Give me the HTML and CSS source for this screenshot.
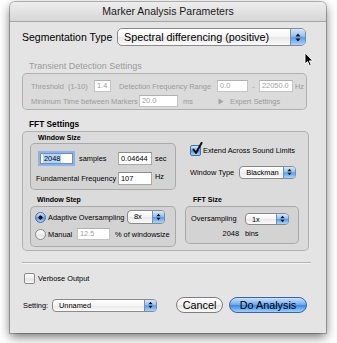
FILE: index.html
```html
<!DOCTYPE html>
<html lang="en">
<head>
    <meta charset="UTF-8" />
    <meta name="viewport" content="width=device-width, initial-scale=1.0" />
    <title>Marker Analysis Parameters</title>
    <link rel="stylesheet" href="styles.css">
</head>
<body>
    <div class="window">
        <div class="titlebar">Marker Analysis Parameters</div>
        <div class="content">
            <div class="seg-row">
                <span class="seg-label">Segmentation Type</span>
                <div class="popup popup-seg">
                    <span class="popup-text">Spectral differencing (positive)</span>
                    <span class="popup-cap"><svg width="6" height="9" viewBox="0 0 6 9"><path d="M3 0.5 L5.5 3.5 H0.5 Z M3 8.5 L5.5 5.5 H0.5 Z" fill="#111"/></svg></span>
                </div>
            </div>

            <div class="group-title disabled">Transient Detection Settings</div>
            <div class="group transient disabled">
                <div class="t-row1">
                    <span>Threshold&nbsp; (1-10)</span>
                    <span class="field">1.4</span>
                    <span class="pad8">Detection Frequency Range</span>
                    <span class="field">0.0</span>
                    <span class="dash">-</span>
                    <span class="field">22050.0</span>
                    <span class="pad2">Hz</span>
                </div>
                <div class="t-row2">
                    <span>Minimum Time between Markers</span>
                    <span class="field">20.0</span>
                    <span class="pad5">ms</span>
                    <span class="disclosure"><svg width="6" height="7" viewBox="0 0 6 7"><path d="M0.5 0.5 L5.5 3.5 L0.5 6.5 Z" fill="#a3a3a3"/></svg></span>
                    <span>Expert Settings</span>
                </div>
            </div>

            <div class="group-title bold">FFT Settings</div>
            <div class="group fft">
                <div class="fft-top">
                    <div class="sub-col">
                        <div class="sub-title title-winsize">Window Size</div>
                        <div class="group winsize">
                            <div class="ws-row1">
                                <span class="field focused"><span class="selection">2048</span></span>
                                <span class="pad6">samples</span>
                                <span class="field">0.04644</span>
                                <span class="pad3">sec</span>
                            </div>
                            <div class="ws-row2">
                                <span>Fundamental Frequency</span>
                                <span class="field">107</span>
                                <span class="pad3 raised">Hz</span>
                            </div>
                        </div>
                    </div>
                    <div class="fft-options">
                        <div class="check-row">
                            <span class="checkbox checked"><svg class="checkmark" width="12" height="13" viewBox="0 0 12 13"><path d="M2.5 7.5 L5 11 L10.5 1" fill="none" stroke="#111" stroke-width="2" stroke-linecap="round" stroke-linejoin="round"/></svg></span>
                            <span>Extend Across Sound Limits</span>
                        </div>
                        <div class="wintype-row">
                            <span>Window Type</span>
                            <div class="popup popup-small popup-wintype">
                                <span class="popup-text">Blackman</span>
                                <span class="popup-cap"><svg width="5" height="8" viewBox="0 0 6 9"><path d="M3 0.5 L5.5 3.5 H0.5 Z M3 8.5 L5.5 5.5 H0.5 Z" fill="#111"/></svg></span>
                            </div>
                        </div>
                    </div>
                </div>

                <div class="fft-bottom">
                    <div class="sub-col">
                        <div class="sub-title title-step">Window Step</div>
                        <div class="group winstep">
                            <div class="step-row1">
                                <span class="radio selected"></span>
                                <span>Adaptive Oversampling</span>
                                <div class="popup popup-small popup-8x">
                                    <span class="popup-text">8x</span>
                                    <span class="popup-cap"><svg width="5" height="8" viewBox="0 0 6 9"><path d="M3 0.5 L5.5 3.5 H0.5 Z M3 8.5 L5.5 5.5 H0.5 Z" fill="#111"/></svg></span>
                                </div>
                            </div>
                            <div class="step-row2">
                                <span class="radio"></span>
                                <span>Manual</span>
                                <span class="field field-disabled">12.5</span>
                                <span class="pad5">% of windowsize</span>
                            </div>
                        </div>
                    </div>
                    <div class="sub-col">
                        <div class="sub-title title-size">FFT Size</div>
                        <div class="group fftsize">
                            <div class="size-row1">
                                <span>Oversampling</span>
                                <div class="popup popup-small popup-1x">
                                    <span class="popup-text">1x</span>
                                    <span class="popup-cap"><svg width="5" height="8" viewBox="0 0 6 9"><path d="M3 0.5 L5.5 3.5 H0.5 Z M3 8.5 L5.5 5.5 H0.5 Z" fill="#111"/></svg></span>
                                </div>
                            </div>
                            <div class="size-row2">
                                <span class="bins-count">2048</span>
                                <span>bins</span>
                            </div>
                        </div>
                    </div>
                </div>
            </div>

            <div class="separator"></div>

            <div class="verbose-row">
                <span class="checkbox"></span>
                <span>Verbose Output</span>
            </div>

            <div class="bottom-row">
                <span class="setting-label">Setting:</span>
                <div class="popup popup-small popup-setting">
                    <span class="popup-text">Unnamed</span>
                    <span class="popup-cap"><svg width="5" height="8" viewBox="0 0 6 9"><path d="M3 0.5 L5.5 3.5 H0.5 Z M3 8.5 L5.5 5.5 H0.5 Z" fill="#111"/></svg></span>
                </div>
                <button class="btn btn-cancel">Cancel</button>
                <button class="btn btn-default">Do Analysis</button>
            </div>
        </div>
    </div>

    <svg class="cursor" width="10" height="15" viewBox="0 0 10 15">
        <path d="M1 0.8 L1 12 L3.6 9.6 L5.5 13.8 L7.2 13 L5.4 8.9 L8.8 8.9 Z" fill="#000" stroke="#fff" stroke-width="0.9" stroke-linejoin="round"/>
    </svg>
</body>
</html>
```

FILE: styles.css
```css
body {
    margin: 0;
    background: #fff;
    font-family: "Lucida Grande", "Liberation Sans", Arial, sans-serif;
    color: #000;
    position: relative;
    overflow: hidden;
    height: 343px;
}

.window {
    margin: 2px 0 0 10px;
    width: 316px;
    height: 331px;
    background: #e4e4e4;
    border-radius: 5px 5px 0 0;
    box-shadow: 0 0 0 1px rgba(0,0,0,0.25), 0 4px 11px rgba(0,0,0,0.55);
}

.titlebar {
    height: 20px;
    box-sizing: border-box;
    border-bottom: 1px solid #a4a4a4;
    border-radius: 5px 5px 0 0;
    background: linear-gradient(#eeeeee, #d6d6d6);
    text-align: center;
    font-size: 10.5px;
    line-height: 19px;
    color: #1a1a1a;
}

.content {
    padding: 5px 0 0 12px;
}

/* popup buttons */
.popup {
    display: flex;
    align-items: stretch;
    box-sizing: border-box;
    border: 1px solid #8a8a8a;
    border-radius: 4px;
    background: linear-gradient(#ffffff, #f4f4f4 50%, #e8e8e8 52%, #fbfbfb);
    overflow: hidden;
}
.popup-text {
    flex: 1;
    white-space: nowrap;
}
.popup-cap {
    display: flex;
    align-items: center;
    justify-content: center;
    border-left: 1px solid #6d8fbe;
    background: linear-gradient(#d7e8fb, #8ebdf0 48%, #5b9be6 52%, #aad4fb);
}

.popup-seg {
    width: 189px;
    height: 18px;
    border-radius: 5px;
}
.popup-seg .popup-text {
    font-size: 10.8px;
    line-height: 16px;
    padding-left: 6px;
}
.popup-seg .popup-cap {
    width: 14px;
}

.popup-small {
    height: 13px;
}
.popup-small .popup-text {
    font-size: 7.4px;
    line-height: 11px;
    padding-left: 6px;
}
.popup-small .popup-cap {
    width: 11px;
}

.seg-row {
    display: flex;
    align-items: center;
    height: 20px;
}
.seg-label {
    width: 95px;
    font-size: 10.5px;
}

/* group boxes */
.group-title {
    margin: 14px 0 1px 7px;
    font-size: 9px;
    line-height: 11px;
}
.group-title.bold {
    margin-top: 9px;
    font-weight: bold;
    font-size: 8.3px;
}
.disabled {
    color: #9a9a9a;
}
.group {
    box-sizing: border-box;
    border: 1px solid rgba(0,0,0,0.2);
    border-radius: 5px;
    background: rgba(0,0,0,0.035);
    font-size: 7.4px;
}

.transient {
    width: 285px;
    height: 37px;
    padding: 6px 0 0 8px;
}
.t-row1, .t-row2 {
    display: grid;
    align-items: center;
    height: 12px;
    white-space: nowrap;
}
.t-row1 {
    grid-template-columns: 63px 17px 106px 31px 11px 34px auto;
}
.t-row2 {
    margin-top: 3px;
    grid-template-columns: 108px 39px 40px 12px auto;
}
.dash {
    text-align: center;
}
.disclosure {
    display: flex;
    align-items: center;
}

.pad2 { padding-left: 2px; }
.pad3 { padding-left: 3px; }
.pad5 { padding-left: 5px; }
.pad6 { padding-left: 6px; }
.pad8 { padding-left: 8px; }

/* text fields */
.field {
    display: block;
    box-sizing: border-box;
    height: 12px;
    padding: 0 2px;
    background: #fff;
    border: 1px solid #a8a8a8;
    border-top-color: #8c8c8c;
    font-size: 7.4px;
    line-height: 10px;
    color: #000;
    white-space: nowrap;
    overflow: hidden;
}
.disabled .field, .field-disabled {
    color: #a0a0a0;
    border-color: #c4c4c4;
    border-top-color: #b0b0b0;
}
.field.focused {
    height: 11px;
    line-height: 9px;
    box-shadow: 0 0 0 2px #8db2e3;
    border-color: #6f8fbd;
}
.selection {
    background: #b5d5ff;
    padding: 0 1px;
}

/* FFT settings */
.fft {
    width: 287px;
    height: 120px;
    padding: 1px 0 0 7px;
}
.fft-top, .fft-bottom {
    display: flex;
}
.sub-title {
    font-weight: bold;
    font-size: 7px;
    line-height: 10px;
    margin-bottom: 0;
}
.title-winsize { margin-left: 8px; }
.title-step { margin-left: 7px; margin-top: 5px; margin-bottom: 1px; }
.title-size { margin-left: 8px; margin-top: 5px; margin-bottom: 1px; }

.winsize {
    width: 146px;
    height: 47px;
    padding: 8px 0 0 0;
}
.ws-row1, .ws-row2 {
    display: grid;
    align-items: center;
    height: 13px;
    white-space: nowrap;
}
.ws-row1 {
    padding-left: 9px;
    grid-template-columns: 33px 45px 34px auto;
}
.ws-row1 .field, .ws-row2 .field {
    height: 13px;
    line-height: 11px;
}
.ws-row1 .field.focused {
    height: 11px;
    line-height: 9px;
}
.ws-row2 {
    margin-top: 7px;
    padding-left: 5px;
    grid-template-columns: 82px 34px auto;
}
.raised {
    margin-top: -4px;
}

.fft-options {
    margin-left: 14px;
    padding-top: 9px;
    font-size: 7.4px;
}
.check-row {
    display: flex;
    align-items: center;
    gap: 2px;
    height: 16px;
}
.wintype-row {
    display: flex;
    align-items: center;
    margin-top: 6px;
    height: 16px;
}
.popup-wintype {
    width: 57px;
    margin-left: 5px;
}

/* checkbox and radio */
.checkbox {
    position: relative;
    display: block;
    width: 11px;
    height: 11px;
    box-sizing: border-box;
    border: 1px solid #8a8a8a;
    border-radius: 2px;
    background: linear-gradient(#ffffff, #ececec 50%, #e0e0e0 52%, #f8f8f8);
}
.checkbox.checked {
    border-color: #4d6f9f;
    background: linear-gradient(#d2e5fb, #7db2ee 48%, #4f92e3 52%, #a6d3fb);
}
.checkmark {
    position: absolute;
    left: 0;
    top: -4px;
}
.radio {
    display: block;
    width: 11px;
    height: 11px;
    box-sizing: border-box;
    border: 1px solid #8a8a8a;
    border-radius: 50%;
    background: linear-gradient(#ffffff, #ececec 50%, #e0e0e0 52%, #f8f8f8);
}
.radio.selected {
    border-color: #4d6f9f;
    background: radial-gradient(circle, #111 0, #111 1.8px, transparent 2.3px),
                linear-gradient(#d2e5fb, #7db2ee 48%, #4f92e3 52%, #a6d3fb);
}

.winstep {
    width: 146px;
    height: 41px;
    padding-top: 3px;
}
.step-row1, .step-row2 {
    display: grid;
    align-items: center;
    padding-left: 4px;
    white-space: nowrap;
}
.step-row1 {
    height: 14px;
    grid-template-columns: 13px 79px 38px;
}
.popup-8x {
    height: 14px;
}
.step-row2 {
    margin-top: 4px;
    height: 12px;
    grid-template-columns: 13px 29px 33px auto;
}

.fft-bottom .sub-col + .sub-col {
    margin-left: 9px;
}
.fftsize {
    width: 114px;
    height: 38px;
    padding: 5px 0 0 5px;
}
.size-row1 {
    display: grid;
    align-items: center;
    height: 13px;
    grid-template-columns: 54px 44px;
}
.popup-1x {
    height: 12px;
}
.size-row2 {
    display: grid;
    align-items: center;
    margin-top: 3px;
    height: 10px;
    grid-template-columns: 54px auto;
}
.bins-count {
    text-align: right;
    padding-right: 6px;
}

.separator {
    margin-top: 11px;
    width: 289px;
    height: 1px;
    background: #b2b2b2;
    box-shadow: 0 1px 0 #f4f4f4;
}

.verbose-row {
    display: flex;
    align-items: center;
    gap: 3px;
    margin: 10px 0 0 2px;
    height: 11px;
    font-size: 7.4px;
}

.bottom-row {
    display: flex;
    align-items: center;
    margin-top: 13px;
    height: 16px;
    font-size: 7.4px;
}
.setting-label {
    margin-left: 1px;
    width: 29px;
}
.popup-setting {
    width: 105px;
}

.btn {
    box-sizing: border-box;
    height: 16px;
    padding: 0;
    font-family: inherit;
    font-size: 10.8px;
    line-height: 14px;
    border-radius: 8px;
    color: #000;
}
.btn-cancel {
    width: 47px;
    margin-left: 19px;
    border: 1px solid #7e7e7e;
    background: linear-gradient(#ffffff, #f2f2f2 50%, #e2e2e2 52%, #fafafa);
}
.btn-default {
    width: 78px;
    margin-left: 6px;
    border: 1px solid #3f62a0;
    background: linear-gradient(#c9e1fb, #74acef 46%, #3f88e2 54%, #9fd2fc);
}

.cursor {
    position: absolute;
    left: 304px;
    top: 52px;
}
```
